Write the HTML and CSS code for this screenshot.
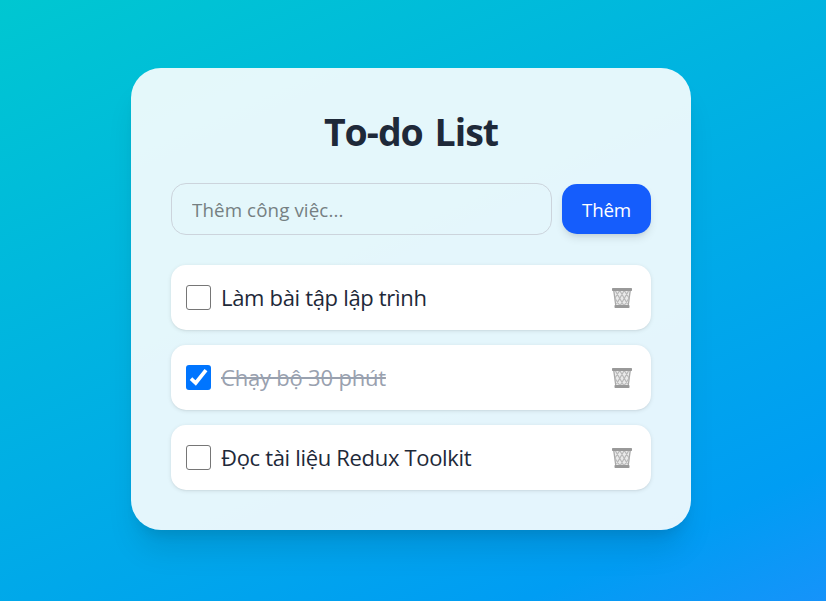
FILE: index.html
```html
<!DOCTYPE html>
<html lang="vi">
<head>
<meta charset="utf-8">
<title>To-do List</title>
<link rel="stylesheet" href="styles.css">
</head>
<body>
<svg width="0" height="0" class="defs" aria-hidden="true">
  <symbol id="trash" viewBox="0 0 22 22">
    <path d="M2.3 3 4.4 18H17.6L19.7 3Z" fill="#eaeaea"/>
    <path d="M2.700 3 4.700 18M19.300 3 17.300 18" stroke="#aaa" stroke-width="1.300" fill="none"/>
    <path d="M4.500 4 12.500 18M8.500 3 16.500 17M13 3 18 11M3.800 11 8.500 18M17.500 4 9.500 18M13.500 3 5.500 17M9 3 4 11M18.200 11 13.500 18" stroke="#b8b8b8" stroke-width="1.200" fill="none"/>
    <rect x="1" y="1" width="20" height="3" rx=".7" fill="#999"/>
    <rect x="3.500" y="18" width="15" height="3" rx=".7" fill="#999"/>
  </symbol>
</svg>
<main class="card">
  <h1 class="title">To-do List</h1>
  <form class="add">
    <input class="field" type="text" placeholder="Thêm công việc...">
    <button class="submit" type="button">Thêm</button>
  </form>
  <ul class="list">
    <li class="item">
      <span class="box"></span>
      <span class="label">Làm bài tập lập trình</span>
      <svg class="trash"><use href="#trash"/></svg>
    </li>
    <li class="item">
      <span class="box checked"><svg viewBox="0 0 25 25"><path d="M5 13.700 9.700 18 20 5.200" fill="none" stroke="#fff" stroke-width="3.700"/></svg></span>
      <span class="label done">Chạy bộ 30 phút</span>
      <svg class="trash"><use href="#trash"/></svg>
    </li>
    <li class="item">
      <span class="box"></span>
      <span class="label">Đọc tài liệu Redux Toolkit</span>
      <svg class="trash"><use href="#trash"/></svg>
    </li>
  </ul>
</main>
</body>
</html>
```
FILE: styles.css
```css
* { box-sizing: border-box; }
body {
  margin: 0;
  height: 601px;
  overflow: hidden;
  padding: 68px 0 0 131px;
  font-family: "Open Sans", "Noto Sans", sans-serif;
  color: #1e2939;
  background: linear-gradient(156deg, #00c7d1 0%, #00b3e1 40%, #009df3 86%, #1693fa 100%);
}
.defs { position: absolute; }
.card {
  width: 560px;
  height: 462px;
  padding: 40px;
  border-radius: 30px;
  background: rgba(253, 254, 254, .9);
  box-shadow: 0 25px 31px -6px rgba(0, 0, 0, .1), 0 10px 13px -7px rgba(0, 0, 0, .1);
}
.title {
  margin: 0 0 30px;
  height: 45px;
  line-height: 48px;
  font-size: 37.500px;
  font-weight: 700;
  text-align: center;
  letter-spacing: -1px;
  word-spacing: 3px;
}
.add { display: flex; align-items: center; gap: 10px; margin: 0; }
.field {
  width: 381px;
  height: 52px;
  padding: 0 20px;
  border: 1px solid #ccd4dc;
  border-radius: 15px;
  background: transparent;
  font: 18.750px "Open Sans", "Noto Sans", sans-serif;
  letter-spacing: .1px;
}
.field::placeholder { color: #757f82; opacity: 1; }
.submit {
  width: 89px;
  height: 50px;
  padding: 0;
  border: 0;
  border-radius: 15px;
  background: #155dfc;
  color: #fff;
  font: 500 18.750px "Open Sans", "Noto Sans", sans-serif;
  letter-spacing: -.2px;
  box-shadow: 0 5px 8px -1px rgba(0, 0, 0, .1), 0 3px 5px -3px rgba(0, 0, 0, .1);
}
.list { display: grid; gap: 15px; margin: 30px 0 0; padding: 0; list-style: none; }
.item {
  display: flex;
  align-items: center;
  height: 65px;
  padding: 0 18px 0 15px;
  border-radius: 15px;
  background: #fff;
  box-shadow: 0 1px 4px rgba(0, 0, 0, .1), 0 1px 2px -1px rgba(0, 0, 0, .1);
}
.box {
  width: 25px;
  height: 25px;
  margin-right: 10px;
  border: 1px solid #767676;
  border-radius: 3px;
}
.checked { border: 0; background: #0075ff; }
.checked svg { display: block; }
.label {
  padding-bottom: 2px;
  font-size: 22px;
  line-height: 30px;
  white-space: nowrap;
  letter-spacing: -.32px;
}
.done { color: #99a1af; letter-spacing: -.2px; text-decoration: line-through; text-decoration-thickness: 2px; }
.trash { width: 22px; height: 22px; margin-left: auto; }
```
